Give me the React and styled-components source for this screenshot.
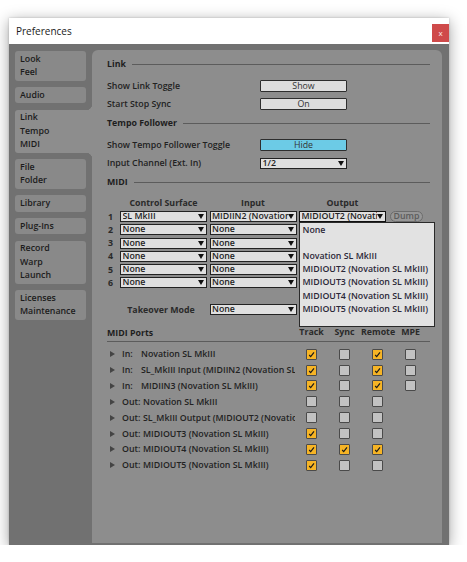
import React from 'react';
import styled, { createGlobalStyle } from 'styled-components';

const GlobalStyle = createGlobalStyle`
  html, body { margin: 0; padding: 0; background: #ffffff; }
  body { font-family: "Open Sans", "DejaVu Sans", sans-serif; -webkit-font-smoothing: antialiased; }
  * { box-sizing: border-box; }
`;

const Page = styled.div`
  padding: 18px 0 0 9px;
`;

const Window = styled.div`
  width: 440px;
  height: 527px;
  display: flex;
  flex-direction: column;
  background: #717171;
  box-shadow: 0 3px 14px rgba(0, 0, 0, 0.38), 0 0 2px rgba(0, 0, 0, 0.2);
`;

const TitleBar = styled.div`
  height: 26px;
  flex: none;
  background: #ffffff;
  display: flex;
  align-items: flex-start;
  justify-content: space-between;
  padding-left: 7px;
`;

const Title = styled.div`
  margin-top: 6px;
  font-size: 10px;
  line-height: 14px;
  color: #1a1a1a;
`;

const CloseButton = styled.div`
  margin-top: 6px;
  width: 17px;
  height: 18px;
  background: #cf4a4a;
  color: #fbe9e9;
  font-size: 8px;
  line-height: 17px;
  text-align: center;
`;

const Body = styled.div`
  flex: 1;
  display: flex;
  padding: 6px 7px 2px 0;
  min-height: 0;
`;

const Sidebar = styled.div`
  width: 83px;
  flex: none;
  padding: 1px 0 0 6px;
  display: flex;
  flex-direction: column;
  gap: 6.5px;
`;

const Tab = styled.div`
  position: relative;
  width: ${(p) => (p.$active ? '77px' : '71px')};
  padding: 1.5px 5px;
  font-size: 8.8px;
  font-weight: 600;
  line-height: 13.3px;
  color: #1c1c1c;
  background: ${(p) => (p.$active ? '#8d8d8d' : '#898989')};
  border-radius: ${(p) => (p.$active ? '3px 0 0 3px' : '3px')};

  ${(p) =>
    p.$active &&
    `
    &::before, &::after {
      content: '';
      position: absolute;
      right: 0;
      width: 6px;
      height: 6px;
    }
    &::before {
      top: -6px;
      background: radial-gradient(circle at 0 0, transparent 6px, #8d8d8d 6.5px);
    }
    &::after {
      bottom: -6px;
      background: radial-gradient(circle at 0 100%, transparent 6px, #8d8d8d 6.5px);
    }
  `}
`;

const Panel = styled.div`
  flex: 1;
  background: #8d8d8d;
  border-radius: 6px 6px 0 0;
  padding: 7px 12px 0 15px;
  font-size: 8.8px;
  font-weight: 600;
  color: #1e1e1e;
`;

const SectionHead = styled.div`
  display: flex;
  align-items: center;
  height: 14px;
  margin-top: ${(p) => (p.$first ? '0' : '3px')};
  margin-bottom: 6px;
  font-weight: 700;
  color: #1e1e1e;
`;

const SectionLine = styled.div`
  flex: 1;
  height: 1px;
  margin-left: 6px;
  background: #5c5c5c;
`;

const SettingRow = styled.div`
  display: flex;
  align-items: center;
  height: 18px;
`;

const SettingLabel = styled.div`
  width: 153px;
  font-weight: 600;
  color: #222;
`;

const ToggleButton = styled.div`
  width: 87px;
  height: 12px;
  border: 1px solid #2e2e2e;
  border-radius: 1px;
  background: ${(p) => (p.$on ? '#6ccbe6' : '#dedede')};
  color: #333;
  font-size: 8.8px;
  font-weight: 500;
  line-height: 10px;
  text-align: center;
`;

const SelectBox = styled.div`
  width: 87px;
  height: 11px;
  display: flex;
  align-items: center;
  border: ${(p) => (p.$focus ? '1.5px solid #111' : '1px solid #222')};
  background: #e0e0e0;
  padding: 0 2px 0 1.5px;
  font-size: 8.8px;
  font-weight: 600;
  color: #232323;
  line-height: 9px;
`;

const SelectText = styled.span`
  flex: 1;
  overflow: hidden;
  white-space: nowrap;
`;

const Arrow = () => (
  <svg width="6" height="5" viewBox="0 0 6 5" style={{ flex: 'none' }}>
    <polygon points="0,0 6,0 3,5" fill="#111" />
  </svg>
);

const Select = ({ value, focus }) => (
  <SelectBox $focus={focus}>
    <SelectText>{value}</SelectText>
    <Arrow />
  </SelectBox>
);

const MidiGrid = styled.div`
  display: grid;
  grid-template-columns: 10.5px 87px 87px 87px auto;
  grid-template-rows: 15px;
  grid-auto-rows: 13.25px;
  column-gap: 2.5px;
  align-items: center;
`;

const ColHead = styled.div`
  text-align: center;
  font-weight: 700;
  color: #2a2a2a;
  align-self: center;
`;

const RowNum = styled.div`
  padding-left: 1px;
  font-weight: 700;
  color: #2a2a2a;
`;

const Cell = styled.div`
  position: relative;
  display: flex;
  align-items: center;
`;

const DumpButton = styled.div`
  margin-left: 1.5px;
  width: 33px;
  height: 11px;
  border: 1px solid #6c6c6c;
  border-radius: 6px;
  background: #979797;
  color: #5c5c5c;
  font-size: 8.8px;
  line-height: 9px;
  text-align: center;
`;

const DropList = styled.div`
  position: absolute;
  z-index: 10;
  top: 10.5px;
  left: 0;
  width: 136px;
  height: 105.5px;
  background: #e2e2e2;
  border: 1px solid #2a2a2a;
  padding-top: 1px;
`;

const DropItem = styled.div`
  height: 13.2px;
  line-height: 13.2px;
  padding-left: 2.5px;
  font-weight: 600;
  color: #2b2838;
  white-space: nowrap;
`;

const TakeoverGrid = styled(MidiGrid)`
  grid-template-rows: 13.25px;
  margin-top: 13.8px;
`;

const TakeoverLabel = styled.div`
  grid-column: 2;
  text-align: center;
  padding-right: 5px;
  font-weight: 700;
  color: #2a2a2a;
`;

const PortsGrid = styled.div`
  display: grid;
  grid-template-columns: 15px 173px repeat(4, 33px);
  align-items: center;
`;

const PortsHead = styled(PortsGrid)`
  margin-top: 9.3px;
  height: 16px;
  border-bottom: 1px solid #5c5c5c;
`;

const PortsTitle = styled.div`
  grid-column: 1 / 3;
  font-weight: 700;
  color: #1e1e1e;
`;

const PortColHead = styled.div`
  text-align: center;
  font-weight: 700;
  color: #2a2a2a;
  margin-top: -2px;
`;

const PortsList = styled.div`
  margin-top: 4.5px;
`;

const PortRow = styled(PortsGrid)`
  height: 15.86px;
`;

const Expander = styled.div`
  margin-left: 3px;
  width: 0;
  height: 0;
  border-left: 5px solid #444;
  border-top: 3px solid transparent;
  border-bottom: 3px solid transparent;
`;

const PortName = styled.div`
  padding-right: 11px;
  overflow: hidden;
  white-space: nowrap;
  font-weight: 600;
  color: #222;
`;

const PortPrefix = styled.span`
  display: inline-block;
  min-width: ${(p) => (p.$out ? '21px' : '19px')};
`;

const BoxCell = styled.div`
  display: flex;
  justify-content: center;
`;

const CheckBox = styled.div`
  width: 11px;
  height: 11px;
  border: 1px solid #4a4a4a;
  border-radius: 1px;
  background: ${(p) => (p.$on ? '#f6b425' : '#c2c2c2')};
  display: flex;
  align-items: center;
  justify-content: center;
`;

const Check = ({ on }) => (
  <CheckBox $on={on}>
    {on && (
      <svg width="7" height="7" viewBox="0 0 7 7">
        <path d="M1.2 4 L2.7 5.6 L6 1.3" fill="none" stroke="#1a1a1a" strokeWidth="1.2" />
      </svg>
    )}
  </CheckBox>
);

const tabs = [
  ['Look', 'Feel'],
  ['Audio'],
  ['Link', 'Tempo', 'MIDI'],
  ['File', 'Folder'],
  ['Library'],
  ['Plug-Ins'],
  ['Record', 'Warp', 'Launch'],
  ['Licenses', 'Maintenance'],
];

const surfaces = [
  ['SL MkIII', 'MIDIIN2 (Novation SL MkIII)', 'MIDIOUT2 (Novation SL MkIII)'],
  ['None', 'None', 'None'],
  ['None', 'None', 'None'],
  ['None', 'None', 'None'],
  ['None', 'None', 'None'],
  ['None', 'None', 'None'],
];

const dropItems = [
  'None',
  '\u00a0',
  'Novation SL MkIII',
  'MIDIOUT2 (Novation SL MkIII)',
  'MIDIOUT3 (Novation SL MkIII)',
  'MIDIOUT4 (Novation SL MkIII)',
  'MIDIOUT5 (Novation SL MkIII)',
];

const ports = [
  { dir: 'In:', name: 'Novation SL MkIII', c: [1, 0, 1, 0] },
  { dir: 'In:', name: 'SL_MkIII Input (MIDIIN2 (Novation SL MkIII))', c: [1, 0, 1, 0] },
  { dir: 'In:', name: 'MIDIIN3 (Novation SL MkIII)', c: [1, 0, 1, 0] },
  { dir: 'Out:', name: 'Novation SL MkIII', c: [0, 0, 0] },
  { dir: 'Out:', name: 'SL_MkIII Output (MIDIOUT2 (Novation SL MkIII))', c: [0, 0, 0] },
  { dir: 'Out:', name: 'MIDIOUT3 (Novation SL MkIII)', c: [1, 0, 0] },
  { dir: 'Out:', name: 'MIDIOUT4 (Novation SL MkIII)', c: [1, 1, 1] },
  { dir: 'Out:', name: 'MIDIOUT5 (Novation SL MkIII)', c: [1, 0, 0] },
];

export default function App() {
  return (
    <>
      <GlobalStyle />
      <Page>
        <Window>
          <TitleBar>
            <Title>Preferences</Title>
            <CloseButton>x</CloseButton>
          </TitleBar>
          <Body>
            <Sidebar>
              {tabs.map((lines, i) => (
                <Tab key={i} $active={i === 2}>
                  {lines.map((l) => (
                    <div key={l}>{l}</div>
                  ))}
                </Tab>
              ))}
            </Sidebar>
            <Panel>
              <SectionHead $first>
                Link
                <SectionLine />
              </SectionHead>
              <SettingRow>
                <SettingLabel>Show Link Toggle</SettingLabel>
                <ToggleButton>Show</ToggleButton>
              </SettingRow>
              <SettingRow>
                <SettingLabel>Start Stop Sync</SettingLabel>
                <ToggleButton>On</ToggleButton>
              </SettingRow>

              <SectionHead>
                Tempo Follower
                <SectionLine />
              </SectionHead>
              <SettingRow>
                <SettingLabel>Show Tempo Follower Toggle</SettingLabel>
                <ToggleButton $on>Hide</ToggleButton>
              </SettingRow>
              <SettingRow>
                <SettingLabel>Input Channel (Ext. In)</SettingLabel>
                <Select value="1/2" />
              </SettingRow>

              <SectionHead>
                MIDI
                <SectionLine />
              </SectionHead>
              <MidiGrid>
                <div />
                <ColHead>Control Surface</ColHead>
                <ColHead>Input</ColHead>
                <ColHead>Output</ColHead>
                <div />
                {surfaces.map((row, i) => (
                  <React.Fragment key={i}>
                    <RowNum>{i + 1}</RowNum>
                    <Cell>
                      <Select value={row[0]} />
                    </Cell>
                    <Cell>
                      <Select value={row[1]} />
                    </Cell>
                    <Cell>
                      <Select value={row[2]} focus={i === 0} />
                      {i === 0 && (
                        <DropList>
                          {dropItems.map((d, k) => (
                            <DropItem key={k}>{d}</DropItem>
                          ))}
                        </DropList>
                      )}
                    </Cell>
                    <Cell>{i === 0 && <DumpButton>Dump</DumpButton>}</Cell>
                  </React.Fragment>
                ))}
              </MidiGrid>
              <TakeoverGrid>
                <TakeoverLabel>Takeover Mode</TakeoverLabel>
                <Cell>
                  <Select value="None" />
                </Cell>
              </TakeoverGrid>

              <PortsHead>
                <PortsTitle>MIDI Ports</PortsTitle>
                <PortColHead>Track</PortColHead>
                <PortColHead>Sync</PortColHead>
                <PortColHead>Remote</PortColHead>
                <PortColHead>MPE</PortColHead>
              </PortsHead>
              <PortsList>
                {ports.map((p, i) => (
                  <PortRow key={i}>
                    <Expander />
                    <PortName>
                      <PortPrefix $out={p.dir === 'Out:'}>{p.dir}</PortPrefix>
                      {p.name}
                    </PortName>
                    {p.c.map((v, k) => (
                      <BoxCell key={k}>
                        <Check on={!!v} />
                      </BoxCell>
                    ))}
                  </PortRow>
                ))}
              </PortsList>
            </Panel>
          </Body>
        </Window>
      </Page>
    </>
  );
}
